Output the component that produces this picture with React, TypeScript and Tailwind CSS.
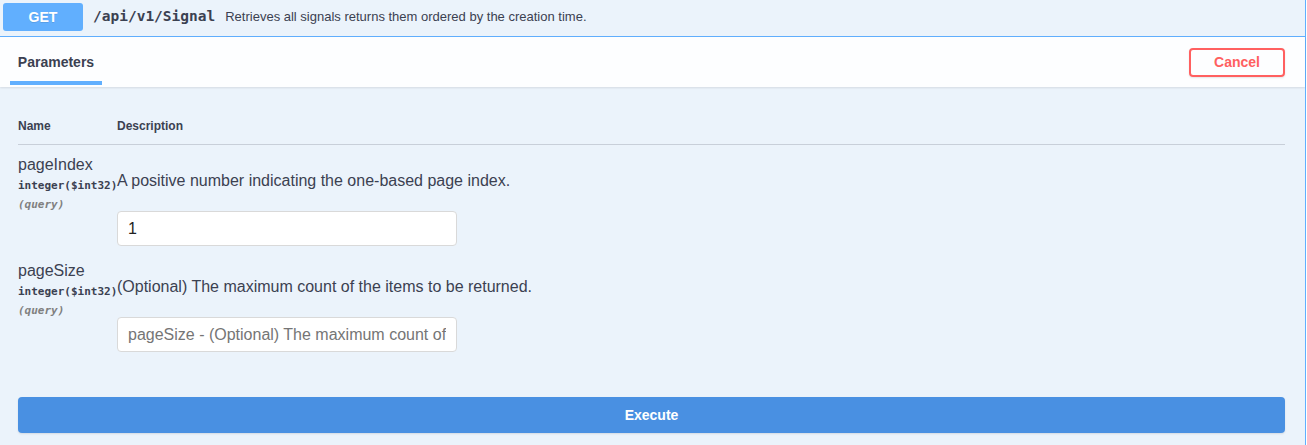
import React from "react";

const sans = "font-['Liberation_Sans',Arial,sans-serif]";
const mono = "font-['DejaVu_Sans_Mono','Liberation_Mono',monospace]";

type Param = {
  name: string;
  type: string;
  location: string;
  description: string;
  value?: string;
  placeholder?: string;
};

const params: Param[] = [
  {
    name: "pageIndex",
    type: "integer($int32)",
    location: "(query)",
    description: "A positive number indicating the one-based page index.",
    value: "1",
  },
  {
    name: "pageSize",
    type: "integer($int32)",
    location: "(query)",
    description: "(Optional) The maximum count of the items to be returned.",
    placeholder:
      "pageSize - (Optional) The maximum count of the items to be returned.",
  },
];

function Summary() {
  return (
    <div className="h-[37px] pt-[3px] border-b border-[#61affe]">
      <div className="flex items-center h-[28px]">
        <span
          className={`ml-[3px] w-[80px] h-[28px] rounded-[3px] bg-[#61affe] flex items-center justify-center text-white font-bold text-[14px] [text-shadow:0_1px_0_rgba(0,0,0,0.1)] ${sans}`}
        >
          GET
        </span>
        <span
          className={`px-[10px] text-[14.5px] font-bold text-[#3b4151] ${mono}`}
        >
          /api/v1/Signal
        </span>
        <span className={`text-[13px] text-[#3b4151] ${sans}`}>
          Retrieves all signals returns them ordered by the creation time.
        </span>
      </div>
    </div>
  );
}

function SectionHeader() {
  return (
    <div className="relative z-10 h-[50px] bg-[#fdfeff] shadow-[0_1px_2px_rgba(0,0,0,0.1)] flex items-center justify-between pl-[10px] pr-[20px]">
      <div className="self-stretch flex flex-col items-center w-[92px] pt-[17px]">
        <span
          className={`leading-[17px] text-[14px] font-bold text-[#3b4151] ${sans}`}
        >
          Parameters
        </span>
        <span className="mt-[10px] h-[4px] w-full bg-[#61affe]" />
      </div>
      <button
        className={`h-[29px] w-[96px] border-2 border-[#ff6060] rounded-[4px] text-[#ff6060] font-bold text-[14px] shadow-[0_1px_2px_rgba(0,0,0,0.1)] ${sans}`}
      >
        Cancel
      </button>
    </div>
  );
}

function ParamRow({ param }: { param: Param }) {
  return (
    <div className="flex pt-[11px] pb-[5px]">
      <div className="w-[99px] shrink-0 flex flex-col">
        <span className={`leading-[18px] text-[16px] text-[#3b4151] ${sans}`}>
          {param.name}
        </span>
        <span
          className={`mt-[5px] leading-[14px] text-[11px] font-bold text-[#3b4151] whitespace-nowrap ${mono}`}
        >
          {param.type}
        </span>
        <span
          className={`mt-[6px] leading-[12px] text-[11px] font-bold italic text-[#808080] ${mono}`}
        >
          {param.location}
        </span>
      </div>
      <div className="flex-1 flex flex-col items-start">
        <p
          className={`mt-[16px] leading-[18px] text-[16px] text-[#3b4151] whitespace-nowrap ${sans}`}
        >
          {param.description}
        </p>
        <input
          className={`mt-[21px] w-[340px] h-[35px] px-[10px] bg-white border border-[#d9d9d9] rounded-[4px] text-[16px] text-[#222] placeholder:text-[#757575] outline-none ${sans}`}
          defaultValue={param.value}
          placeholder={param.placeholder}
        />
      </div>
    </div>
  );
}

export default function App() {
  return (
    <div className="w-[1307px] h-[445px] overflow-hidden bg-white flex">
      <div className="w-[1306px] h-full bg-[#ebf3fb] border-r border-[#61affe] flex flex-col">
        <Summary />
        <SectionHeader />
        <div className="pt-[32px] pl-[18px] pr-[20px]">
          <div
            className={`flex pb-[10px] border-b border-[#c8cfd9] text-[12px] font-bold leading-[15px] text-[#3b4151] ${sans}`}
          >
            <span className="w-[99px]">Name</span>
            <span>Description</span>
          </div>
          {params.map((p) => (
            <ParamRow key={p.name} param={p} />
          ))}
          <button
            className={`mt-[40px] w-full h-[36px] rounded-[4px] bg-[#4990e2] text-white font-bold text-[14px] shadow-[0_1px_2px_rgba(0,0,0,0.1)] ${sans}`}
          >
            Execute
          </button>
        </div>
      </div>
    </div>
  );
}
